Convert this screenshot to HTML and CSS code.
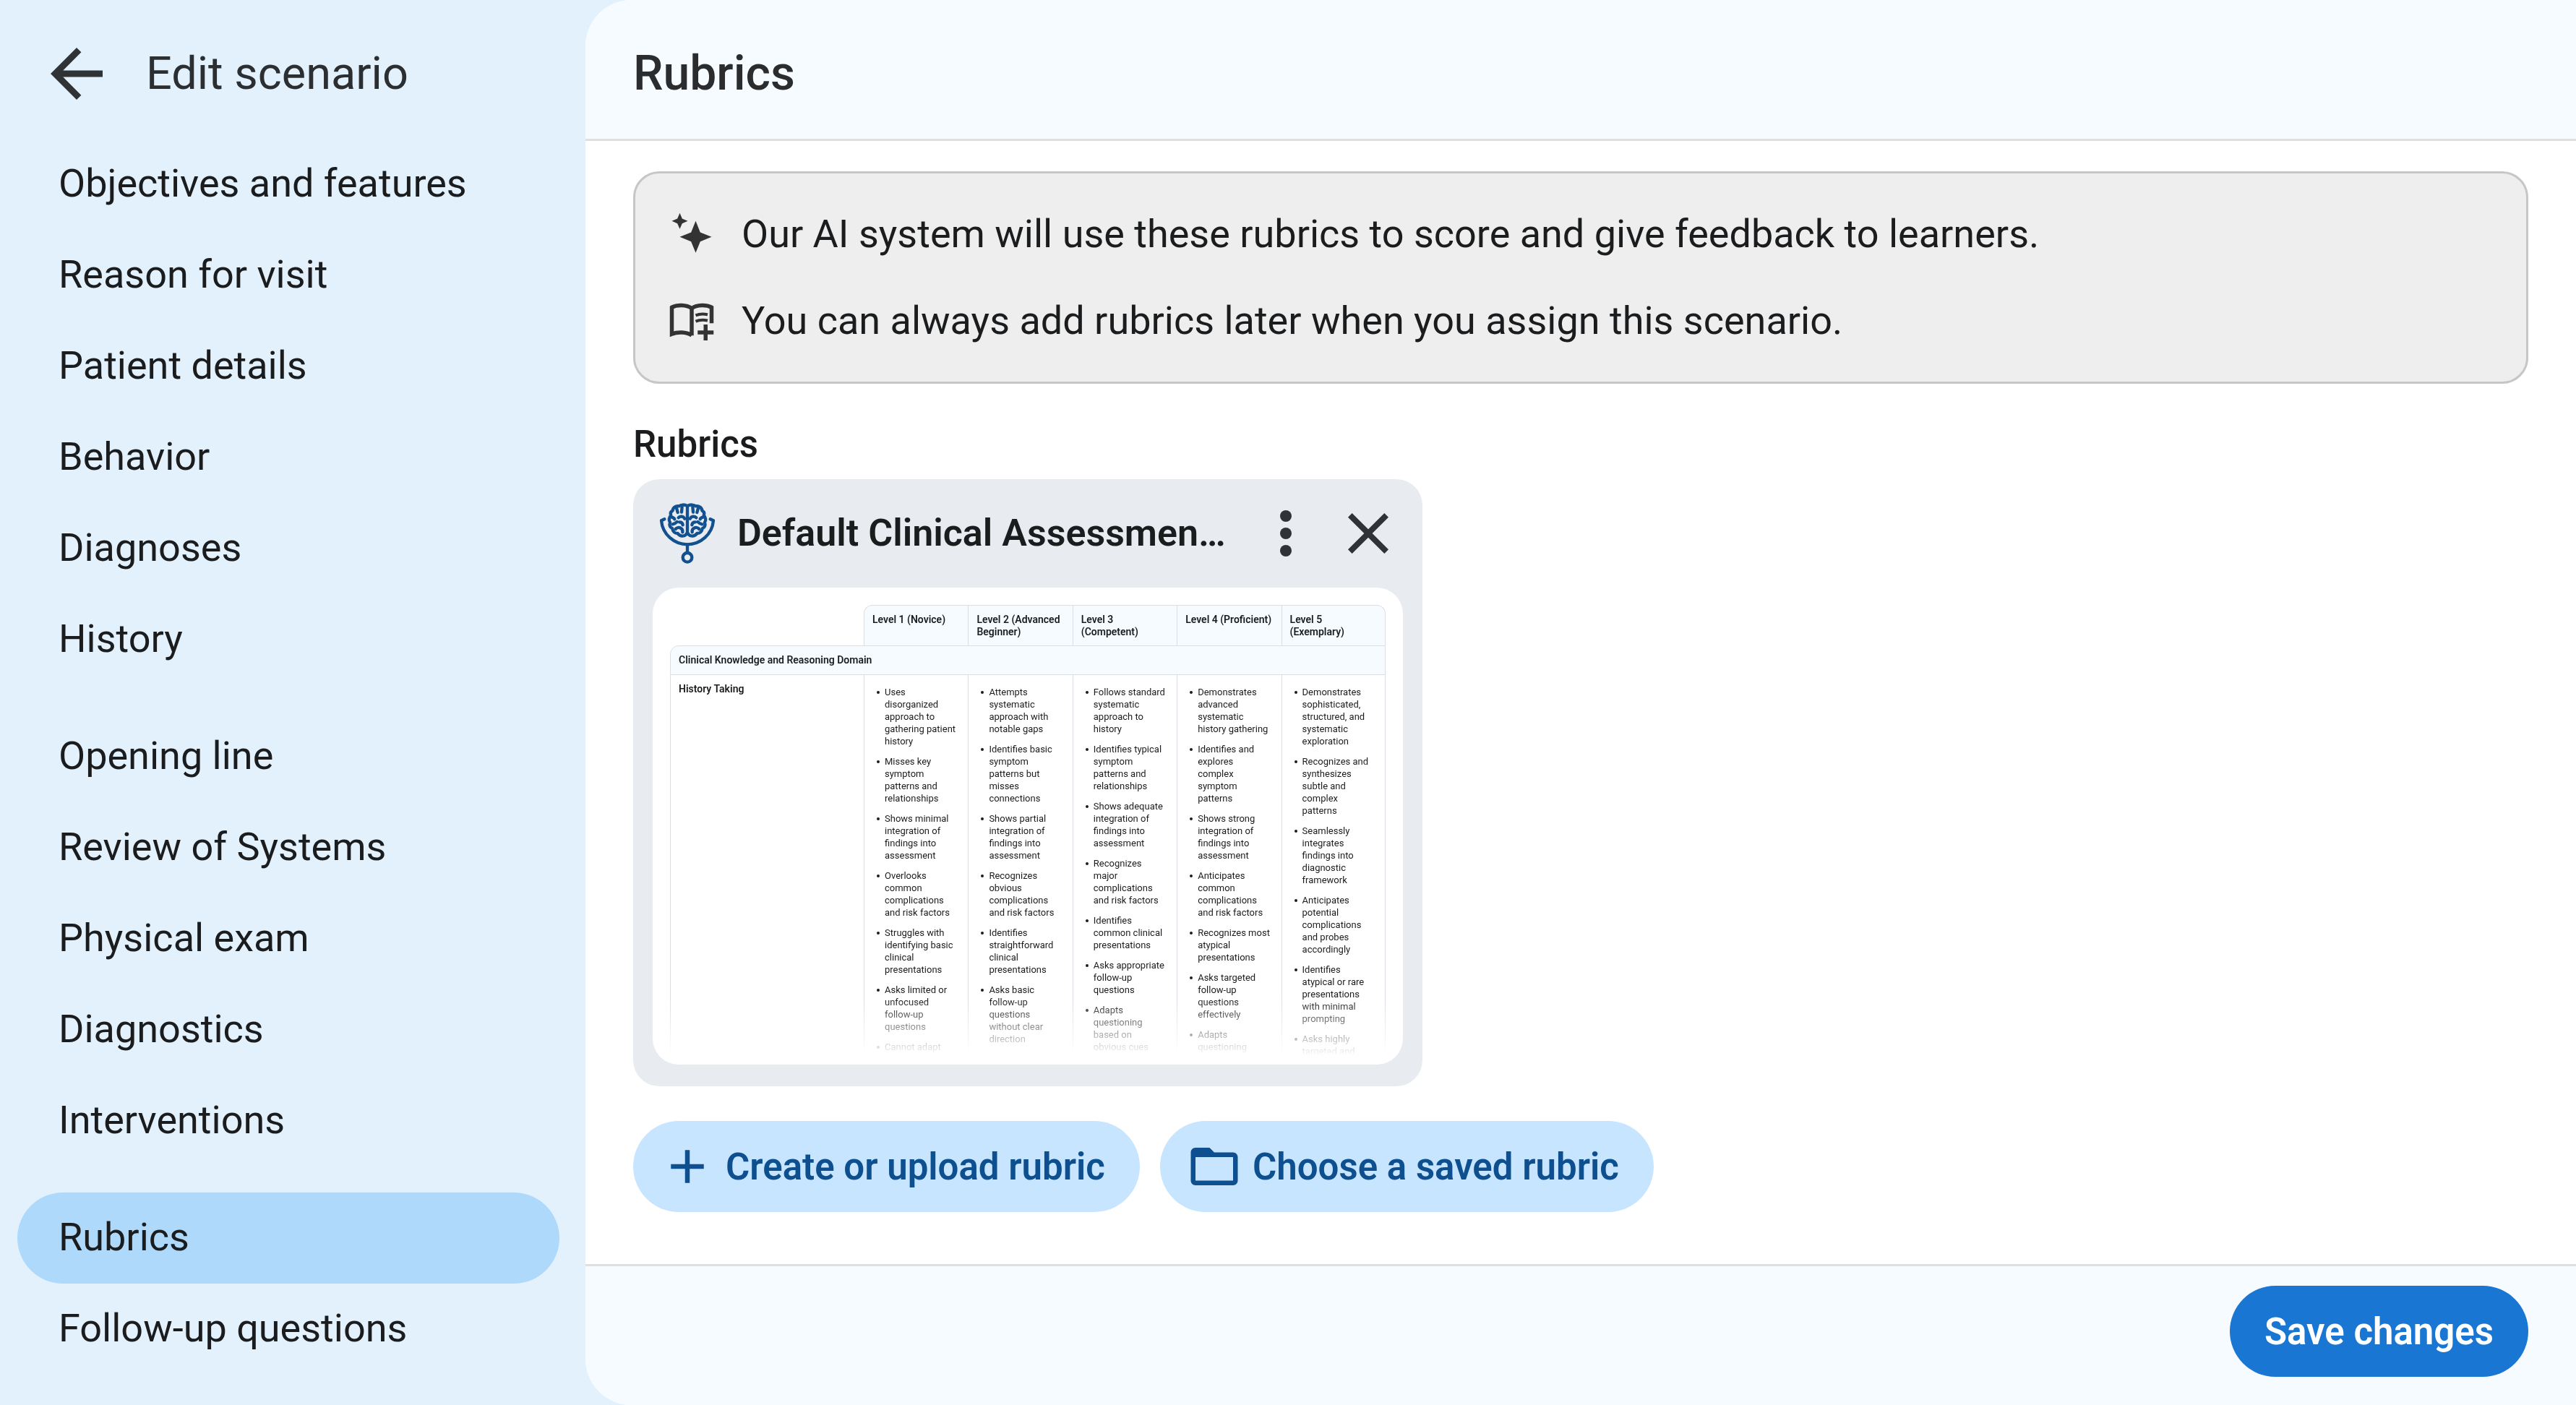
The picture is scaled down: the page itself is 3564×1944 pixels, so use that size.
FILE: index.html
```html
<!DOCTYPE html>
<html lang="en">
<head>
<meta charset="utf-8">
<meta name="viewport" content="width=device-width, initial-scale=1">
<title>Edit scenario</title>
<link rel="stylesheet" href="styles.css">
</head>
<body>
<div class="app">
  <aside class="sidebar">
    <div class="sidebar-head">
      <button class="icon-button" type="button" aria-label="Back">
        <svg class="icon-back" viewBox="0 0 24 24" aria-hidden="true"><path d="M20 11H7.83l5.59-5.59L12 4l-8 8 8 8 1.41-1.41L7.83 13H20v-2z"/></svg>
      </button>
      <span class="sidebar-title">Edit scenario</span>
    </div>
    <nav class="nav">
      <ul class="nav-group">
        <li><a class="nav-link" href="#objectives">Objectives and features</a></li>
        <li><a class="nav-link" href="#reason">Reason for visit</a></li>
        <li><a class="nav-link" href="#patient">Patient details</a></li>
        <li><a class="nav-link" href="#behavior">Behavior</a></li>
        <li><a class="nav-link" href="#diagnoses">Diagnoses</a></li>
        <li><a class="nav-link" href="#history">History</a></li>
      </ul>
      <ul class="nav-group">
        <li><a class="nav-link" href="#opening">Opening line</a></li>
        <li><a class="nav-link" href="#systems">Review of Systems</a></li>
        <li><a class="nav-link" href="#exam">Physical exam</a></li>
        <li><a class="nav-link" href="#diagnostics">Diagnostics</a></li>
        <li><a class="nav-link" href="#interventions">Interventions</a></li>
      </ul>
      <ul class="nav-group">
        <li><a class="nav-link nav-link-active" href="#rubrics" aria-current="page">Rubrics</a></li>
        <li><a class="nav-link" href="#follow-up">Follow-up questions</a></li>
      </ul>
    </nav>
  </aside>

  <main class="main">
    <header class="main-head">
      <h1 class="main-title">Rubrics</h1>
    </header>

    <div class="content">
      <section class="info">
        <div class="info-row">
          <svg class="icon-info" viewBox="0 0 24 24" aria-hidden="true">
            <path d="M14 5.4l2.3 5.7 5.7 2.3-5.7 2.3-2.3 5.7-2.3-5.7L6 13.4l5.7-2.3zM6 1.4l1.2 2.8L10 5.4 7.2 6.6 6 9.4 4.8 6.6 2 5.4l2.8-1.2z"/>
          </svg>
          <p class="info-text">Our AI system will use these rubrics to score and give feedback to learners.</p>
        </div>
        <div class="info-row">
          <svg class="icon-info icon-line" viewBox="0 0 24 24" aria-hidden="true">
            <path stroke-width="2" d="M12 19.4V5.7C9.3 3.8 4.7 3.8 2 5.2v13.4c3-1.2 7.2-1.1 10 .6"/>
            <path stroke-width="2" d="M12 5.7c2.7-1.9 7.3-1.9 10-.5V13.2M19 13.800v8M15 17.8h8"/>
            <path stroke-width="1.5" d="M14 9.2c1.7-.7 4-.8 6-.4M14 12.2c1.7-.7 4-.8 6-.4"/>
          </svg>
          <p class="info-text">You can always add rubrics later when you assign this scenario.</p>
        </div>
      </section>

      <h2 class="section-label">Rubrics</h2>

      <article class="card">
        <div class="card-head">
          <svg class="logo" viewBox="66 78 234 252" aria-hidden="true">
            <g class="logo-line">
              <path d="M88 145l-13 6c5 57 53 99 108 99s103-42 108-99l-13-6"/>
              <path d="M183 250v34"/>
              <circle cx="183" cy="304" r="19"/>
              <path d="M183 92v114"/>
              <path d="M183 90c-12-7-28-5-34 1-14-3-26 6-27 18-9 6-10 14-7 20-9 8-10 22-4 29-4 12 0 22 10 26 1 12 10 20 22 20 8 12 26 15 34 5 2-2 4-4 6-8"/>
              <path d="M138 99l5 18M161 94l-2 22M118 137c5 1 10 3 12 8M146 139c8-8 20-7 26 4M122 166c10-2 16-8 18-10M150 157c7 0 13 3 14 12M134 186c5-6 14-8 21-4 7 3 9 9 8 17"/>
              <path d="M183 90c12-7 28-5 34 1 14-3 26 6 27 18 9 6 10 14 7 20 9 8 10 22 4 29 4 12 0 22-10 26-1 12-10 20-22 20-8 12-26 15-34 5-2-2-4-4-6-8"/>
              <path d="M228 99l-5 18M205 94l2 22M248 137c-5 1-10 3-12 8M220 139c-8-8-20-7-26 4M244 166c-10-2-16-8-18-10M216 157c-7 0-13 3-14 12M232 186c-5-6-14-8-21-4-7 3-9 9-8 17"/>
            </g>
          </svg>
          <h3 class="card-title">Default Clinical Assessmen…</h3>
          <button class="icon-button" type="button" aria-label="More options">
            <svg class="icon-action" viewBox="0 0 24 24" aria-hidden="true"><circle cx="12" cy="6" r="2"/><circle cx="12" cy="12" r="2"/><circle cx="12" cy="18" r="2"/></svg>
          </button>
          <button class="icon-button" type="button" aria-label="Remove rubric">
            <svg class="icon-action" viewBox="0 0 24 24" aria-hidden="true"><path d="M19 6.41L17.59 5 12 10.59 6.41 5 5 6.41 10.59 12 5 17.59 6.41 19 12 13.41 17.59 19 19 17.59 13.41 12z"/></svg>
          </button>
        </div>

        <div class="preview">
          <div class="preview-clip">
            <table class="rubric">
              <colgroup><col class="col-name"><col><col><col><col><col></colgroup>
              <thead>
                <tr>
                  <td></td>
                  <th class="level level-first" scope="col">Level 1 (Novice)</th>
                  <th class="level" scope="col">Level 2 (Advanced Beginner)</th>
                  <th class="level" scope="col">Level 3 (Competent)</th>
                  <th class="level" scope="col">Level 4 (Proficient)</th>
                  <th class="level level-last" scope="col">Level 5 (Exemplary)</th>
                </tr>
              </thead>
              <tbody>
                <tr><th class="domain" colspan="6" scope="colgroup">Clinical Knowledge and Reasoning Domain</th></tr>
                <tr>
                  <th class="criterion" scope="row">History Taking</th>
                  <td class="cell"><ul class="points">
                    <li>Uses disorganized approach to gathering patient history</li>
                    <li>Misses key symptom patterns and relationships</li>
                    <li>Shows minimal integration of findings into assessment</li>
                    <li>Overlooks common complications and risk factors</li>
                    <li>Struggles with identifying basic clinical presentations</li>
                    <li>Asks limited or unfocused follow-up questions</li>
                    <li>Cannot adapt</li>
                  </ul></td>
                  <td class="cell"><ul class="points">
                    <li>Attempts systematic approach with notable gaps</li>
                    <li>Identifies basic symptom patterns but misses connections</li>
                    <li>Shows partial integration of findings into assessment</li>
                    <li>Recognizes obvious complications and risk factors</li>
                    <li>Identifies straightforward clinical presentations</li>
                    <li>Asks basic follow-up questions<br>without clear direction</li>
                  </ul></td>
                  <td class="cell"><ul class="points">
                    <li>Follows standard systematic approach to history</li>
                    <li>Identifies typical symptom patterns and relationships</li>
                    <li>Shows adequate integration of findings into assessment</li>
                    <li>Recognizes<br>major complications and risk factors</li>
                    <li>Identifies common clinical presentations</li>
                    <li>Asks appropriate follow-up questions</li>
                    <li>Adapts questioning based on<br>obvious cues</li>
                  </ul></td>
                  <td class="cell"><ul class="points">
                    <li>Demonstrates advanced systematic history gathering</li>
                    <li>Identifies and explores<br>complex symptom patterns</li>
                    <li>Shows strong integration of findings into assessment</li>
                    <li>Anticipates common complications and risk factors</li>
                    <li>Recognizes most atypical presentations</li>
                    <li>Asks targeted follow-up questions effectively</li>
                    <li>Adapts questioning</li>
                  </ul></td>
                  <td class="cell"><ul class="points">
                    <li>Demonstrates sophisticated, structured, and systematic exploration</li>
                    <li>Recognizes and synthesizes subtle and complex<br>patterns</li>
                    <li>Seamlessly integrates findings into diagnostic framework</li>
                    <li>Anticipates potential complications and probes accordingly</li>
                    <li>Identifies<br>atypical or rare presentations with minimal prompting</li>
                    <li>Asks highly targeted and</li>
                  </ul></td>
                </tr>
              </tbody>
            </table>
          </div>
        </div>
      </article>

      <div class="actions">
        <button class="button button-tonal" type="button">
          <svg class="icon-button-glyph" viewBox="0 0 24 24" aria-hidden="true"><path d="M19 13h-6v6h-2v-6H5v-2h6V5h2v6h6v2z"/></svg>
          Create or upload rubric
        </button>
        <button class="button button-tonal" type="button">
          <svg class="icon-button-glyph" viewBox="0 0 24 24" aria-hidden="true"><path d="M20 6h-8l-2-2H4c-1.1 0-1.99.9-1.99 2L2 18c0 1.1.9 2 2 2h16c1.1 0 2-.9 2-2V8c0-1.1-.9-2-2-2zm0 12H4V8h16v10z"/></svg>
          Choose a saved rubric
        </button>
      </div>
    </div>

    <footer class="main-foot">
      <button class="button button-primary" type="button">Save changes</button>
    </footer>
  </main>
</div>
</body>
</html>
```

FILE: styles.css
```css
* {
  box-sizing: border-box;
}

body {
  margin: 0;
  background: #e3f1fd;
  color: #1a1c1e;
  font-family: Roboto, "Liberation Sans", sans-serif;
}

h1, h2, h3, p, ul {
  margin: 0;
  padding: 0;
}

svg {
  display: block;
  flex: none;
  fill: currentColor;
}

.app {
  display: grid;
  grid-template-columns: 810px minmax(0, 1fr);
  min-height: 100vh;
}

/* Sidebar */

.sidebar-head {
  display: flex;
  align-items: center;
  gap: 42px;
  height: 192px;
  padding: 12px 52px 0;
  color: #2c2f31;
}

.sidebar-title {
  font-size: 63px;
  line-height: 72px;
}

.icon-button {
  flex: none;
  padding: 0;
  border: 0;
  background: none;
  color: #303336;
  cursor: pointer;
}

.icon-back {
  width: 108px;
  height: 108px;
}

.nav {
  display: flex;
  flex-direction: column;
  gap: 36px;
  padding: 0 36px 42px 24px;
}

.nav-group {
  list-style: none;
}

.nav-link {
  display: block;
  padding: 30px 57px 32px;
  border-radius: 63px;
  color: inherit;
  font-size: 54px;
  line-height: 64px;
  text-decoration: none;
}

.nav-link-active {
  background: #aed9fb;
}

/* Main panel */

.main {
  display: flex;
  flex-direction: column;
  overflow: hidden;
  border-radius: 64px 0 0 64px;
  background: #fff;
}

.main-head {
  display: flex;
  align-items: center;
  height: 195px;
  padding: 12px 66px 0;
  border-bottom: 3px solid #dedfe1;
  background: #f6fbff;
}

.main-title {
  color: #2a2c2e;
  font-size: 66px;
  font-weight: 500;
  line-height: 72px;
}

.content {
  flex: 1;
  padding: 42px 66px 72px;
}

.info {
  display: flex;
  flex-direction: column;
  gap: 42px;
  padding: 45px;
  border: 3px solid #c6c6c6;
  border-radius: 36px;
  background: #eee;
}

.info-row {
  display: flex;
  align-items: center;
  gap: 36px;
}

.icon-info {
  width: 66px;
  height: 66px;
  color: #333;
}

.icon-line {
  fill: none;
  stroke: currentColor;
}

.info-text {
  font-size: 54px;
  line-height: 78px;
}

.section-label {
  margin: 54px 0 18px;
  font-size: 51px;
  font-weight: 500;
  line-height: 60px;
}

/* Rubric card */

.card {
  width: 1092px;
  max-width: 100%;
  padding: 0 27px 30px;
  border-radius: 36px;
  background: #e8ebf0;
}

.card-head {
  display: flex;
  align-items: center;
  gap: 18px;
  height: 150px;
  padding-left: 9px;
}

.logo {
  width: 78px;
  height: 84px;
  margin-right: 12px;
}

.logo-line {
  fill: none;
  stroke: #12508f;
  stroke-width: 13;
  stroke-linecap: round;
  stroke-linejoin: round;
}

.card-title {
  flex: 1;
  font-size: 52px;
  font-weight: 600;
  line-height: 60px;
  white-space: nowrap;
}

.icon-action {
  width: 96px;
  height: 96px;
}

.preview {
  height: 660px;
  padding: 24px 24px 12px;
  overflow: hidden;
  border-radius: 36px;
  background: #fff;
}

.preview-clip {
  height: 624px;
  overflow: hidden;
  -webkit-mask-image: linear-gradient(#000 544px, transparent 624px);
  mask-image: linear-gradient(#000 544px, transparent 624px);
}

.rubric {
  width: 100%;
  border-spacing: 0;
  table-layout: fixed;
  font-size: 13px;
  line-height: 17px;
}

.rubric th {
  font-size: 14px;
  font-weight: 600;
  text-align: left;
  vertical-align: top;
}

.rubric .col-name {
  width: 268px;
}

.rubric .level {
  padding: 11px 8px 10px 11px;
  border-top: 1px solid #d9dfe4;
  border-left: 1px solid #d9dfe4;
  background: #f6fbff;
}

.rubric .level-first {
  border-top-left-radius: 12px;
}

.rubric .level-last {
  border-right: 1px solid #d9dfe4;
  border-top-right-radius: 12px;
}

.rubric .domain {
  padding: 11px;
  border: 1px solid #d9dfe4;
  border-top-left-radius: 12px;
  background: #f6fbff;
}

.rubric .criterion {
  padding: 11px;
  border-left: 1px solid #d9dfe4;
}

.rubric .cell {
  padding: 15px 12px 0 28px;
  border-left: 1px solid #d9dfe4;
  vertical-align: top;
}

.rubric .cell:last-child {
  border-right: 1px solid #d9dfe4;
}

.points {
  display: flex;
  flex-direction: column;
  gap: 11px;
  list-style: none;
}

.points li {
  position: relative;
}

.points li::before {
  content: "";
  position: absolute;
  top: 7px;
  left: -11px;
  width: 4px;
  height: 4px;
  border-radius: 50%;
  background: currentColor;
}

/* Buttons */

.actions {
  display: flex;
  flex-wrap: wrap;
  gap: 28px;
  margin-top: 48px;
}

.button {
  display: flex;
  align-items: center;
  height: 126px;
  padding: 0 48px;
  border: 0;
  border-radius: 63px;
  font-family: inherit;
  font-size: 51px;
  font-weight: 600;
  cursor: pointer;
}

.button-tonal {
  gap: 14px;
  padding-left: 36px;
  background: #c7e5ff;
  color: #0d4f8f;
}

.icon-button-glyph {
  width: 78px;
  height: 78px;
}

.button-primary {
  background: #1976d2;
  color: #fff;
}

.main-foot {
  display: flex;
  justify-content: flex-end;
  padding: 27px 66px 39px;
  border-top: 3px solid #dedfe1;
  background: #f6fbff;
}
```
